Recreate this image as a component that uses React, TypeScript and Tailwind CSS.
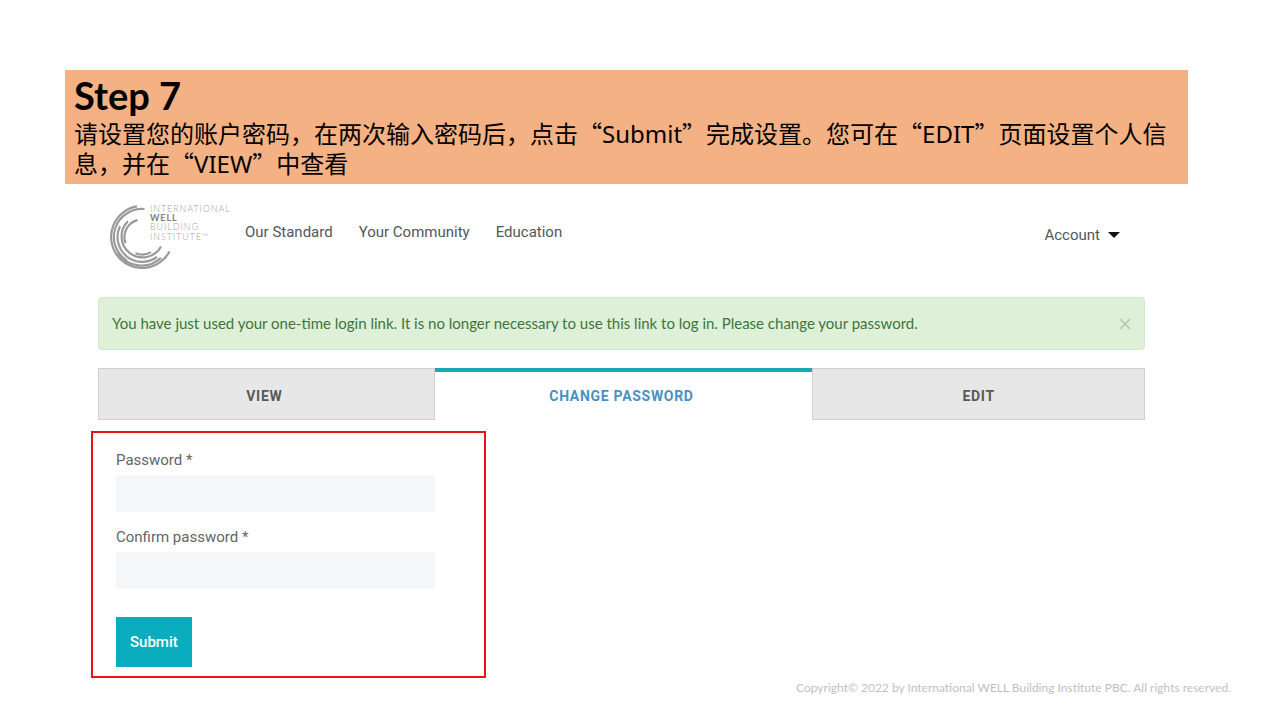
import type { ReactNode } from "react";

function Latin({ children }: { children: ReactNode }) {
  return <span className="font-['Noto_Sans',sans-serif]">{children}</span>;
}

function StepBanner() {
  return (
    <section
      lang="zh-CN"
      className="ml-[65px] mr-[92px] bg-[#f4b183] pt-[6px] pr-[9px] pb-[6px] pl-[9px] text-black"
    >
      <h1 className="mb-[3px] font-['Lato',sans-serif] text-[38px] font-bold leading-[39px]">Step 7</h1>
      <p className="font-['Noto_Sans_CJK_SC',sans-serif] text-2xl leading-[29px]">
        请设置您的账户密码，在两次输入密码后，点击“<Latin>Submit</Latin>”完成设置。您可在“<Latin>EDIT</Latin>”页面设置个人信息，并在“<Latin>VIEW</Latin>”中查看
      </p>
    </section>
  );
}

function Logo() {
  return (
    <svg viewBox="0 0 128 68" className="h-[68px] w-32" role="img" aria-label="International WELL Building Institute">
      <g fill="none" stroke="#9a9a9a" strokeWidth="2.2">
        <path d="M28 3.4A31 31 0 1 0 60.5 48.5" />
        <path d="M35.5 6.1A28 28 0 0 0 18 57.7" />
        <path d="M16 52A25 25 0 0 0 48 54" />
        <path d="M9 50A28.3 28.3 0 0 0 52 54.9" />
        <path d="M11 23.2A24.5 24.5 0 0 0 17 52.5" />
        <path d="M19 18.3A21 21 0 1 0 52 43.5" />
        <path d="M28.5 17.1A17.5 17.5 0 0 0 16.5 40" />
        <path d="M26.5 50.3A17.5 17.5 0 0 0 42 49.1" />
      </g>
      <g className="font-['Lato',sans-serif] text-[9px] font-light tracking-widest" fill="#a3a3a3">
        <text x="41" y="9">INTERNATIONAL</text>
        <text x="41" y="18" className="font-bold" fill="#808080">WELL</text>
        <text x="41" y="27">BUILDING</text>
        <text x="41" y="37">INSTITUTE™</text>
      </g>
    </svg>
  );
}

function SiteHeader() {
  return (
    <header className="flex items-start pl-[11px] pr-[25px] text-[15px] leading-5 text-[#54565a]">
      <a href="#home"><Logo /></a>
      <nav className="mt-[19px] ml-2 flex gap-[26px]">
        <a href="#standard">Our Standard</a>
        <a href="#community">Your Community</a>
        <a href="#education">Education</a>
      </nav>
      <button type="button" className="mt-[22px] ml-auto flex items-center gap-2">
        Account
        <svg viewBox="0 0 12 6" className="h-[6px] w-3" fill="#111" aria-hidden="true"><path d="M0 0H12L6 6Z" /></svg>
      </button>
    </header>
  );
}

function Alert() {
  return (
    <div role="status" className="mt-[26px] flex h-[53px] items-center justify-between rounded-sm border border-[#d3eac8] bg-[#dff0d8] px-[13px] font-['Lato',sans-serif] text-[15px] text-[#3c763d]">
      <p>You have just used your one-time login link. It is no longer necessary to use this link to log in. Please change your password.</p>
      <button type="button" aria-label="Close" className="text-[#b3c4ad]">
        <svg viewBox="0 0 12 12" className="size-3" fill="none" stroke="currentColor" strokeWidth="1.5"><path d="M1 1L11 11M11 1L1 11" /></svg>
      </button>
    </div>
  );
}

function Tabs() {
  const idle = "flex items-center justify-center border border-[#cfcfcf] bg-[#e7e7e7] pt-1";
  return (
    <nav className="mt-[18px] grid h-[52px] grid-cols-[337fr_378fr_333fr] text-sm font-bold tracking-wider text-[#58595b]">
      <a href="#view" className={`${idle} pr-1`}>VIEW</a>
      <a href="#password" aria-current="page" className="flex items-center justify-center border-t-4 border-[#1ba8b1] pr-1 text-[#4a90c4]">CHANGE PASSWORD</a>
      <a href="#edit" className={idle}>EDIT</a>
    </nav>
  );
}

function PasswordField({ id, label }: { id: string; label: string }) {
  return (
    <div className="flex flex-col gap-[5px]">
      <label htmlFor={id} className="leading-5">{label} *</label>
      <input id={id} type="password" required className="h-[37px] w-full bg-[#f5f6f8] px-3 outline-none" />
    </div>
  );
}

function PasswordForm() {
  return (
    <form className="mt-[11px] -ml-[7px] w-[395px] max-w-full border-2 border-[#e81414] pt-[17px] pr-[49px] pb-[9px] pl-[23px] text-[15px] text-[#626468]">
      <div className="flex flex-col gap-[15px]">
        <PasswordField id="password" label="Password" />
        <PasswordField id="confirm" label="Confirm password" />
      </div>
      <button type="submit" className="mt-7 h-[50px] bg-[#09adbd] px-[14px] font-medium text-white">Submit</button>
    </form>
  );
}

export default function App() {
  return (
    <div className="min-h-screen bg-white pt-[70px] font-['Roboto',sans-serif]">
      <StepBanner />
      <main className="mt-[19px] mr-[135px] ml-[98px]">
        <SiteHeader />
        <Alert />
        <Tabs />
        <PasswordForm />
      </main>
      <footer className="mr-[49px] text-right font-['Lato',sans-serif] text-xs leading-5 text-[#bfbfbf]">
        Copyright© 2022 by International WELL Building Institute PBC. All rights reserved.
      </footer>
    </div>
  );
}
